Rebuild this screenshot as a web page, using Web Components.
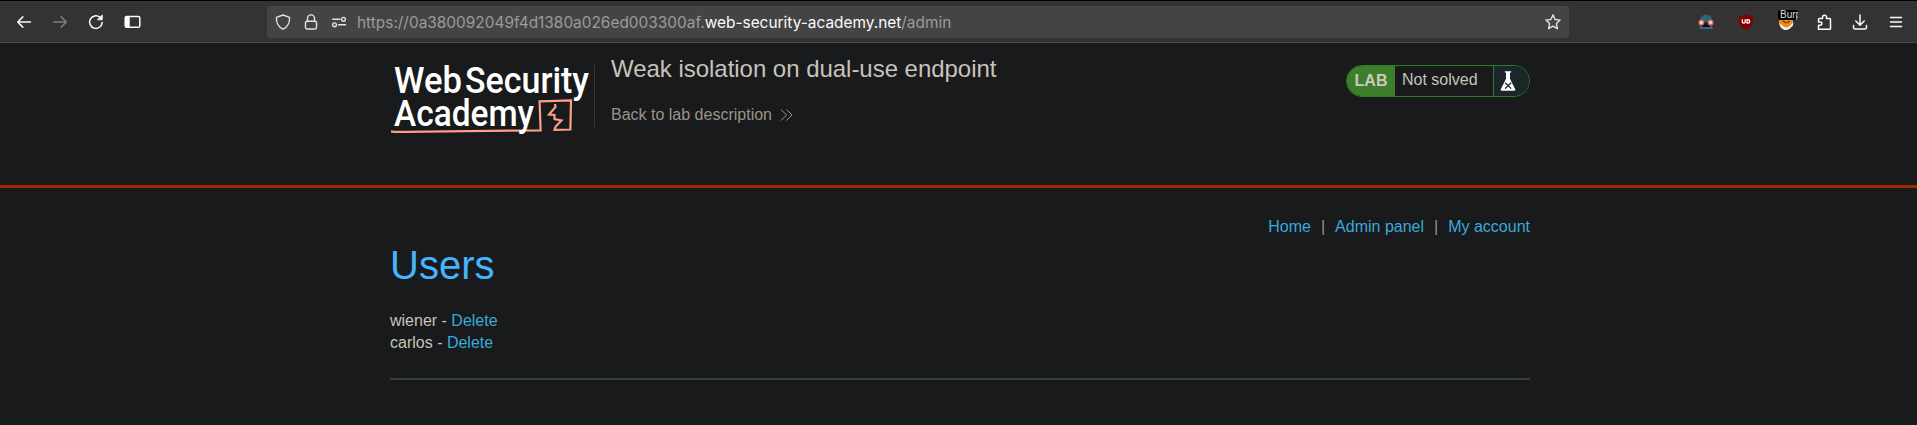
<!DOCTYPE html>
<html lang="en">
<head>
<meta charset="utf-8">
<title>Weak isolation on dual-use endpoint</title>
<style>
html,body{margin:0;height:100%;background:#181a1b;overflow:hidden}
body{font-family:"Liberation Sans",Arial,sans-serif;font-size:16px;color:#c8c3bc}
</style>
</head>
<body>
<browser-bar></browser-bar>
<academy-header></academy-header>
<lab-page></lab-page>
<script>
class Base extends HTMLElement {
  constructor() {
    super();
    this.attachShadow({mode: 'open'}).innerHTML = this.constructor.markup;
  }
}

class BrowserBar extends Base {
  static markup = `
<style>
:host{display:grid;grid-template-columns:267px 1302px 1fr;height:41px;border-top:1px solid #000;border-bottom:1px solid #474849;background:#333;box-sizing:content-box;font-family:Inter,sans-serif;align-items:center}
svg{display:block;fill:none;stroke:#fbfbfe;stroke-width:1.5;stroke-linecap:round;stroke-linejoin:round;flex:none}
.nav{display:flex;gap:20px;padding-left:16px}
.url{display:flex;align-items:center;height:32px;background:#444;border-radius:4px;box-sizing:border-box;padding:0 8px;color:#9b9b9b;font-size:15.42px;white-space:pre}
.url svg{stroke:#e2e2e4;stroke-width:1.4}
.url b{font-weight:400;color:#fbfbfe}
.addr{margin-left:10px;flex:1;display:flex;line-height:20px;padding-top:2px}
.site{display:flex;gap:12px}
.ext{display:flex;justify-content:flex-end;align-items:center;padding-right:13px}
.burp{position:relative;width:20px;height:16px}
.tag{position:absolute;left:0;top:-4px;width:20px;height:10px;border-radius:2px;background:#000;color:#ddd;font:10px/10px "Liberation Sans",sans-serif;overflow:hidden;text-indent:2px}
</style>
<div class="nav">
<svg width="16" height="16"><path d="M14.5 8H1.8M6.800 2.900L1.700 8l5.100 5.100"/></svg>
<svg width="16" height="16" style="stroke:#7d7d7e"><path d="M1.500 8h12.700M9.200 2.900L14.300 8l-5.100 5.100"/></svg>
<svg width="16" height="16"><path d="M14.200 8.600A6.300 6.300 0 1 1 11.800 3.100"/><path d="M14.300 1.200v4.600H9.700z" fill="#fbfbfe" stroke-width=".8"/></svg>
<svg width="17" height="16"><rect x="1.200" y="2.500" width="14.600" height="10.800" rx="1.600"/><path d="M2 3h3v10H2z" fill="#fbfbfe"/></svg>
</div>
<div class="url">
<div class="site">
<svg width="16" height="16"><path d="M8 1L14.500 3.300C15 8 12.800 13 8 15.200C3.200 13 1 8 1.500 3.300Z"/></svg>
<svg width="16" height="16"><rect x="2.500" y="7.200" width="11" height="7.800" rx="1.400"/><path d="M4.500 7V4.400a3.500 3.500 0 0 1 7 0V7"/></svg>
<svg width="16" height="16"><path d="M1.800 5.300h7M7.500 10.800h7"/><circle cx="12.500" cy="5.300" r="1.900"/><circle cx="3.500" cy="10.800" r="1.900"/></svg>
</div>
<div class="addr"><span>https://0a380092049f4d1380a026ed003300af.</span><b>web-security-academy.net</b><span>/admin</span></div>
<svg width="16" height="16"><path d="M8 .9l2.100 4.600 5 .6-3.700 3.500 1 5L8 12.100l-4.400 2.500 1-5L.9 6.100l5-.6z"/></svg>
</div>
<div class="ext">
<svg width="16" height="16" style="stroke:none;margin-right:24px"><path d="M1.500 8C1.500 3 4.500.800 8 .8S14.500 3 14.500 8z" fill="#2d6478"/><path d="M3 8h10v4H3z" fill="#17252c"/><path d="M1.500 15v-2.500L4 11h8l2.500 1.500V15z" fill="#326b7b"/><path d="M4 10.500h8V13H4z" fill="#0b1418"/><circle cx="3.400" cy="8.600" r="2.200" fill="#fbe3dc" stroke="#e8705c" stroke-width="1.500"/><circle cx="12.600" cy="8.600" r="2.200" fill="#fbe3dc" stroke="#e8705c" stroke-width="1.500"/></svg>
<svg width="16" height="16" style="stroke:none;margin-right:24px"><path d="M8 .5c2 1.200 4.500 1.800 7 1.800v4.200c0 4.800-3 7.300-7 9.200C4 13.800 1 11.300 1 6.500V2.300c2.500 0 5-.6 7-1.800z" fill="#800000"/><path d="M4.300 5.700v2a1.450 1.450 0 0 0 2.900 0v-2M9 5.700v3.400h1a1.700 1.700 0 0 0 0-3.400z" stroke="#fff" stroke-width="1.300"/></svg>
<div class="burp"><svg width="16" height="16" style="stroke:none"><path d="M1.500 2h13l.7 7-2 4-4 2.500H6.500L3 13 .8 8.500z" fill="#ed8d13"/><path d="M.8 9l3 2 2.500 2 2.500.500 3-1.500 3.400-4-.2 3.500-3 3-3 1.500H6.500L3 14z" fill="#eee"/><path d="M5.500 7l1 1M11 7.500l-1 1M8 8.500v.5" stroke="#4a2d0d" stroke-width="1.200"/></svg><div class="tag">Burp</div></div>
<svg width="16" height="16" style="margin-left:19px"><path d="M1.500 15.200V11.300h1.700a1.700 1.700 0 0 0 0-3.400H1.500V5.300q0-.8.8-.8H5.500V3.200a2 2 0 0 1 4 0V4.500h3.200q.8 0 .8.8v9.100q0 .8-.8.8z"/></svg>
<svg width="16" height="16" style="margin-left:19px"><path d="M8 1v10M3.800 7L8 11.200 12.200 7M1.500 11.500v1.900q0 1.600 1.600 1.600h9.800q1.600 0 1.600-1.600v-1.900"/></svg>
<svg width="16" height="16" style="margin-left:20px"><path d="M2.500 3.500h11M2.500 8h11M2.500 12.500h11"/></svg>
</div>`;
}
customElements.define('browser-bar', BrowserBar);

class AcademyLogo extends Base {
  static markup = `
<style>:host{display:block;width:204px;height:72px}svg{display:block}text{font-family:Roboto,sans-serif;font-weight:500;font-size:37.5px;fill:#fff}</style>
<svg width="204" height="72" viewBox="390 63 204 72">
<path d="M391 131.400Q395 132.200 405 131.800L540.600 130.300 539.600 101.400 571 100.400 570.400 129.500 554.500 129.900 555.500 126.800 561.500 120.500 554.500 119 554.500 115 549 114.500 555.500 107 555 104" fill="none" stroke="#ff9e88" stroke-width="2.200"/>
<text x="394" y="93.300" textLength="68" lengthAdjust="spacingAndGlyphs">Web</text>
<text x="465" y="93.300" textLength="124" lengthAdjust="spacingAndGlyphs">Security</text>
<text x="394" y="125.600" textLength="140" lengthAdjust="spacingAndGlyphs">Academy</text>
</svg>`;
}
customElements.define('academy-logo', AcademyLogo);

class LabStatus extends Base {
  static markup = `
<style>
:host{display:flex;box-sizing:border-box;width:184px;height:32px;border:1px solid #2b7d27;border-radius:16px;overflow:hidden}
.tag{width:48px;background:#3d7e2a;color:#ccc9be;font:bold 16px/30px "Liberation Sans",sans-serif;text-align:center}
.state{flex:1;padding-left:7px;line-height:28px;border-right:1px solid #2b7d27}
.flask{width:35px;background:#1b262b}svg{display:block;margin:5px 0 0 5px}
</style>
<div class="tag">LAB</div><div class="state"><slot></slot></div>
<div class="flask"><svg width="18" height="21"><path d="M5.800.3h6.400v1.200h-1.200v6.300L16.300 18.500q.2 1.200-1 1.200H2.700q-1.200 0-1-1.200L7 7.800V1.500H5.800z" fill="#fff"/><path d="M6.200 11.800l6 5.800M12.200 11.800l-6 5.800" stroke="#1b262b" stroke-width="1.300"/></svg></div>`;
}
customElements.define('lab-status', LabStatus);

class AcademyHeader extends Base {
  static markup = `
<style>
:host{display:block;height:142px;border-bottom:3px solid #a32900}
.in{width:1140px;margin-left:390px;display:flex;align-items:flex-start;padding-top:20px}
.rule{width:1px;height:62px;background:#34393b;margin-top:2px}
.title{margin-left:16px;flex:1;margin-top:-9px}
h2{font-weight:400;font-size:24px;line-height:30px;letter-spacing:-.03px;margin:0;white-space:nowrap}
a{display:flex;align-items:center;margin-top:21px;line-height:20px;color:#9c9488}
svg{margin-left:8px;fill:none;stroke:#9c9488}
lab-status{margin-top:2px}
</style>
<div class="in"><academy-logo></academy-logo><div class="rule"></div>
<div class="title"><h2>Weak isolation on dual-use endpoint</h2><a><span>Back to lab description</span><svg width="13" height="13"><path d="M1 .5l5.500 5.500L1 11.500M6.500.5L12 6 6.500 11.500"/></svg></a></div>
<lab-status>Not solved</lab-status></div>`;
}
customElements.define('academy-header', AcademyHeader);

class LabPage extends Base {
  static markup = `
<style>
:host{display:block;width:1140px;padding:28px 0 0 390px}
nav{display:flex;justify-content:flex-end;line-height:22px;white-space:pre}
a{color:#3ba9dc}i{font-style:normal;color:#9c9488;margin:0 10px}
h1{font-weight:400;font-size:40px;line-height:48px;color:#46b3ff;margin:3px 0 21px}
p{margin:0;line-height:22px}
hr{border:0;height:2px;background:#383d3f;margin:24px 0 0}
</style>
<nav><a>Home</a><i>|</i><a>Admin panel</a><i>|</i><a>My account</a></nav>
<h1>Users</h1>
<p>wiener - <a>Delete</a></p><p>carlos - <a>Delete</a></p><hr>`;
}
customElements.define('lab-page', LabPage);
</script>
</body>
</html>
